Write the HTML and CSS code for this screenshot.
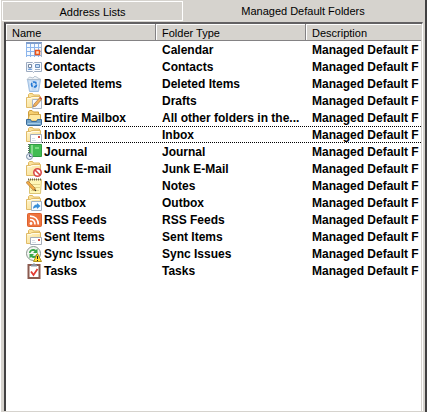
FILE: index.html
```html
<!DOCTYPE html>
<html lang="en">
<head>
<meta charset="utf-8">
<title>Managed Default Folders</title>
<link rel="stylesheet" href="styles.css">
</head>
<body>
<svg class="defs" aria-hidden="true">
  <defs>
    <linearGradient id="gold" x1="0" y1="0" x2="1" y2="1">
      <stop offset="0" stop-color="#fff6cf"/><stop offset="1" stop-color="#f8d983"/>
    </linearGradient>
    <symbol id="folder" viewBox="0 0 16 16">
      <path d="M2.500 11.500v-10l1-1h3l1 1.500h6v9z" fill="#fbe29b" stroke="#dfb65c"/>
      <path d="M.5 14.500v-10h4l1-1h9v11z" fill="url(#gold)" stroke="#e0bb68"/>
      <path d="M1.500 5.500h4l1-1h7" fill="none" stroke="#fffbe8"/>
    </symbol>
  </defs>
</svg>
<main class="panel">
  <div class="tabs" role="tablist">
    <button class="tab" type="button" role="tab" aria-selected="false">Address Lists</button>
    <button class="tab tab-active" type="button" role="tab" aria-selected="true">Managed Default Folders</button>
  </div>
  <section class="list">
    <table>
      <colgroup><col class="col-name"><col class="col-type"><col></colgroup>
      <thead><tr><th>Name</th><th>Folder Type</th><th>Description</th></tr></thead>
      <tbody>
        <tr><td><span class="item"><svg viewBox="0 0 16 16"><path d="M0 1h15v14H0z" fill="#f5faff"/><path d="M.5 1v14M4.500 1v14M8.500 1v14M12.500 1v14M0 5.500h15M0 9.500h15M0 13.500h15" stroke="#8cb5ec"/><path d="M0 0h16v2H0z" fill="#7f9dcb"/><path d="M15.500 1v14" stroke="#a7b5c8"/><path d="M9.500 8.500h4v4h-4z" fill="#ffe0c8" stroke="#ec5418" stroke-width="1.500"/></svg>Calendar</span></td><td>Calendar</td><td>Managed Default F</td></tr>
        <tr><td><span class="item"><svg viewBox="0 0 16 16"><path d="M.5 3.500h6l1 1 1-1h7v9h-7l-1 1-1-1h-6z" fill="#fafcff" stroke="#9cabc0"/><path d="M1.500 5h5v6h-5z" fill="#d4e3f5"/><path d="M2.500 5.500h3v3h-3z" fill="#fff" stroke="#7889a3"/><path d="M2 11c0-2 4-2 4 0z" fill="#6c9ddb"/><path d="M9.500 5.500h4v3h-4z" fill="#c5dcf5" stroke="#6a8fbd"/><path d="M9 10.500h5" stroke="#9fb0c5"/></svg>Contacts</span></td><td>Contacts</td><td>Managed Default F</td></tr>
        <tr><td><span class="item"><svg viewBox="0 0 16 16"><path d="M1.500 3.500h13l-2 12h-9z" fill="#c3daf3" stroke="#9fbfe2"/><path d="M1 3.500L3.500 1 7 2l2-2 3 2 3 1.500z" fill="#edf1f5" stroke="#a9b8c7" stroke-width=".8"/><path d="M4 5l1 9M12 5l-1 9" stroke="#e6f1fc"/><circle cx="8" cy="8.500" r="2.500" fill="none" stroke="#2479d4" stroke-width="1.700" stroke-dasharray="4 1.200"/></svg>Deleted Items</span></td><td>Deleted Items</td><td>Managed Default F</td></tr>
        <tr><td><span class="item"><svg viewBox="0 0 16 16"><use href="#folder"/><path d="M6.500 6.500h9v9h-9z" fill="#f7faff" stroke="#a9b6c8"/><path d="M7 14l1-3 6-6.500 2 1.500-6 7z" fill="#f3b35a" stroke="#a1754b" stroke-width=".7"/><path d="M13 5l1.200-1.200L16 5.300 15 6.500z" fill="#d65343"/></svg>Drafts</span></td><td>Drafts</td><td>Managed Default F</td></tr>
        <tr><td><span class="item"><svg viewBox="0 0 16 16"><path d="M2.500 11V2l1-1.500H6L7.500 2h5v9z" fill="#f6cf70" stroke="#cc9c3b"/><path d="M1.500 11l2-6.500h11V11z" fill="#ffe8a0" stroke="#d1a449"/><path d="M.5 9.500h4l1 2h5l1-2h4v5l-1 1h-13l-1-1z" fill="#71a3ca" stroke="#3b6c99"/><path d="M1.500 13.500h13" stroke="#a5cce9"/></svg>Entire Mailbox</span></td><td>All other folders in the...</td><td>Managed Default F</td></tr>
        <tr class="focused"><td><span class="item"><svg viewBox="0 0 16 16"><use href="#folder"/><path d="M4.500 7.500h11v8h-11z" fill="#fff" stroke="#a4adba"/><path d="M6 13.500h4M6 11.500h3" stroke="#d7dee7"/><path d="M12 9h2v2h-2z" fill="#d44a42"/></svg>Inbox</span></td><td>Inbox</td><td>Managed Default F</td></tr>
        <tr><td><span class="item"><svg viewBox="0 0 16 16"><path d="M3.500.5h12v12h-12z" fill="#42bc52" stroke="#319c42"/><path d="M5 1h2v11H5z" fill="#86db8b"/><path d="M9 3h4v2H9z" fill="#7bdc82"/><path d="M3 0v12" stroke="#587565" stroke-width="2" stroke-dasharray="1 1"/><circle cx="3.500" cy="12.500" r="3" fill="#e7eef7" stroke="#798ca4"/><path d="M3.500 10.500v2h2" stroke="#44597a" fill="none"/></svg>Journal</span></td><td>Journal</td><td>Managed Default F</td></tr>
        <tr><td><span class="item"><svg viewBox="0 0 16 16"><use href="#folder"/><circle cx="11.500" cy="11.500" r="3.700" fill="#fff" stroke="#d94847" stroke-width="1.600"/><path d="M9 9l5 5" stroke="#d94847" stroke-width="1.600"/></svg>Junk E-mail</span></td><td>Junk E-Mail</td><td>Managed Default F</td></tr>
        <tr><td><span class="item"><svg viewBox="0 0 16 16"><path d="M3.500 1.500h12l-1 14h-11z" fill="#fff6b5" stroke="#dbc574"/><path d="M5 6.500h9M5 9.500h9M5 12.500h8" stroke="#e1d28a"/><path d="M2 1.500h14" stroke="#6c614e" stroke-width="2" stroke-dasharray="1 1"/><path d="M0 4.500L2 3l7 7 1 3-3-1z" fill="#f2aa45" stroke="#9a6b31" stroke-width=".6"/><path d="M8.500 11.500L10 13" stroke="#333"/></svg>Notes</span></td><td>Notes</td><td>Managed Default F</td></tr>
        <tr><td><span class="item"><svg viewBox="0 0 16 16"><use href="#folder"/><path d="M5.500 6.500h10v9h-10z" fill="#f7fbff" stroke="#a2b3c5"/><path d="M7 14c0-3 1.500-4.500 4-4.500V8l3.500 3-3.500 3v-1.500c-2 0-3 .5-4 1.500z" fill="#378fd9"/></svg>Outbox</span></td><td>Outbox</td><td>Managed Default F</td></tr>
        <tr><td><span class="item"><svg viewBox="0 0 16 16"><rect x="1.500" y="1.500" width="14" height="13" rx="1" fill="#ee7440" stroke="#dc612c"/><circle cx="5" cy="11.500" r="1.400" fill="#fff"/><path d="M4 7.500c3 0 5 2 5 5M4 4.200c5 0 8.300 3.300 8.300 8.300" fill="none" stroke="#fff" stroke-width="1.700"/></svg>RSS Feeds</span></td><td>RSS Feeds</td><td>Managed Default F</td></tr>
        <tr><td><span class="item"><svg viewBox="0 0 16 16"><use href="#folder"/><path d="M4.500 8.500h11v7h-11z" fill="#fff" stroke="#a4adba"/><path d="M6 13.500h4M6 11.500h3" stroke="#d7dee7"/><path d="M12 10h2v2h-2z" fill="#d44a42"/></svg>Sent Items</span></td><td>Sent Items</td><td>Managed Default F</td></tr>
        <tr><td><span class="item"><svg viewBox="0 0 16 16"><circle cx="7.500" cy="7.500" r="7" fill="#f2f5f2" stroke="#8c9690"/><path d="M3 7c0-4 5-5 7-3l1.500-1.500V7H7l1.500-1.500C7 4.500 5 5 4.500 7zM12 8c0 4-5 5-7 3l-1.500 1.500V8H8L6.500 9.500C8 10.500 10 10 10.500 8z" fill="#36a847"/><path d="M11.500 7.500l4 8h-8z" fill="#ffdf32" stroke="#b19218"/><path d="M11.500 10v3M11.500 14v1" stroke="#222"/></svg>Sync Issues</span></td><td>Sync Issues</td><td>Managed Default F</td></tr>
        <tr><td><span class="item"><svg viewBox="0 0 16 16"><path d="M2.500 2h11v13h-11z" fill="#fff" stroke="#8b5a4f" stroke-width="2"/><path d="M5 3.500V2l2-1 1-1 1 1 2 1v1.500z" fill="#8996a5"/><path d="M5 8.500L7.500 12 11.500 6" fill="none" stroke="#e33a31" stroke-width="1.800"/></svg>Tasks</span></td><td>Tasks</td><td>Managed Default F</td></tr>
      </tbody>
    </table>
  </section>
</main>
</body>
</html>
```
FILE: styles.css
```css
* {
  box-sizing: border-box;
}

body {
  margin: 0;
  background: #d6d3ce;
  color: #000;
  font-family: "Liberation Sans", Arial, sans-serif;
  font-size: 11px;
}

.defs {
  position: absolute;
  width: 0;
  height: 0;
}

.panel {
  display: flex;
  flex-direction: column;
  min-height: 100vh;
  padding: 0 2px 1px 4px;
  border-right: 2px solid #424142;
  box-shadow: inset 1px 0 #fff;
}

.tabs {
  display: flex;
  height: 22px;
  margin-left: -2px;
}

.tab {
  flex: 0 1 43%;
  height: 20px;
  margin-top: 1px;
  padding: 2px 0 0;
  border: 1px solid #fff;
  background: none;
  color: inherit;
  font: inherit;
}

.tab-active {
  flex: 1 1 57%;
  height: 19px;
  padding: 0;
  border: 0;
}

.list {
  flex: 1;
  overflow: hidden;
  border: 1px solid #848284;
  border-width: 2px 1px 0 2px;
  border-color: #636163 #fff #d6d3ce #424142;
  background: #fff;
  box-shadow: inset -1px 0 #d6d3ce;
}

table {
  width: 100%;
  padding-right: 1px;
  border-collapse: separate;
  border-spacing: 0;
  table-layout: fixed;
}

.col-name,
.col-type {
  width: 150px;
}

th {
  height: 17px;
  padding: 1px 6px 0;
  border-right: 1px solid #848284;
  border-bottom: 1px solid #848284;
  background: #d6d3ce;
  box-shadow: inset 1px 1px #fff;
  font-weight: normal;
  text-align: left;
}

th:last-child {
  border-right: 0;
}

td {
  height: 17px;
  padding: 2px 0 0 6px;
  overflow: hidden;
  font-size: 12px;
  font-weight: bold;
  line-height: 15px;
  white-space: nowrap;
}

td:first-child {
  padding-left: 20px;
}

.item {
  display: flex;
  align-items: flex-end;
  gap: 2px;
  height: 15px;
}

.item svg {
  flex: none;
  width: 16px;
  height: 16px;
}

.focused td {
  background:
    repeating-linear-gradient(90deg, #000 0 1px, #fff 1px 2px) top / 100% 1px no-repeat,
    repeating-linear-gradient(90deg, #000 0 1px, #fff 1px 2px) bottom / 100% 1px no-repeat;
}

.focused td:first-child {
  background-position: 36px 0, 36px 100%;
}
```
